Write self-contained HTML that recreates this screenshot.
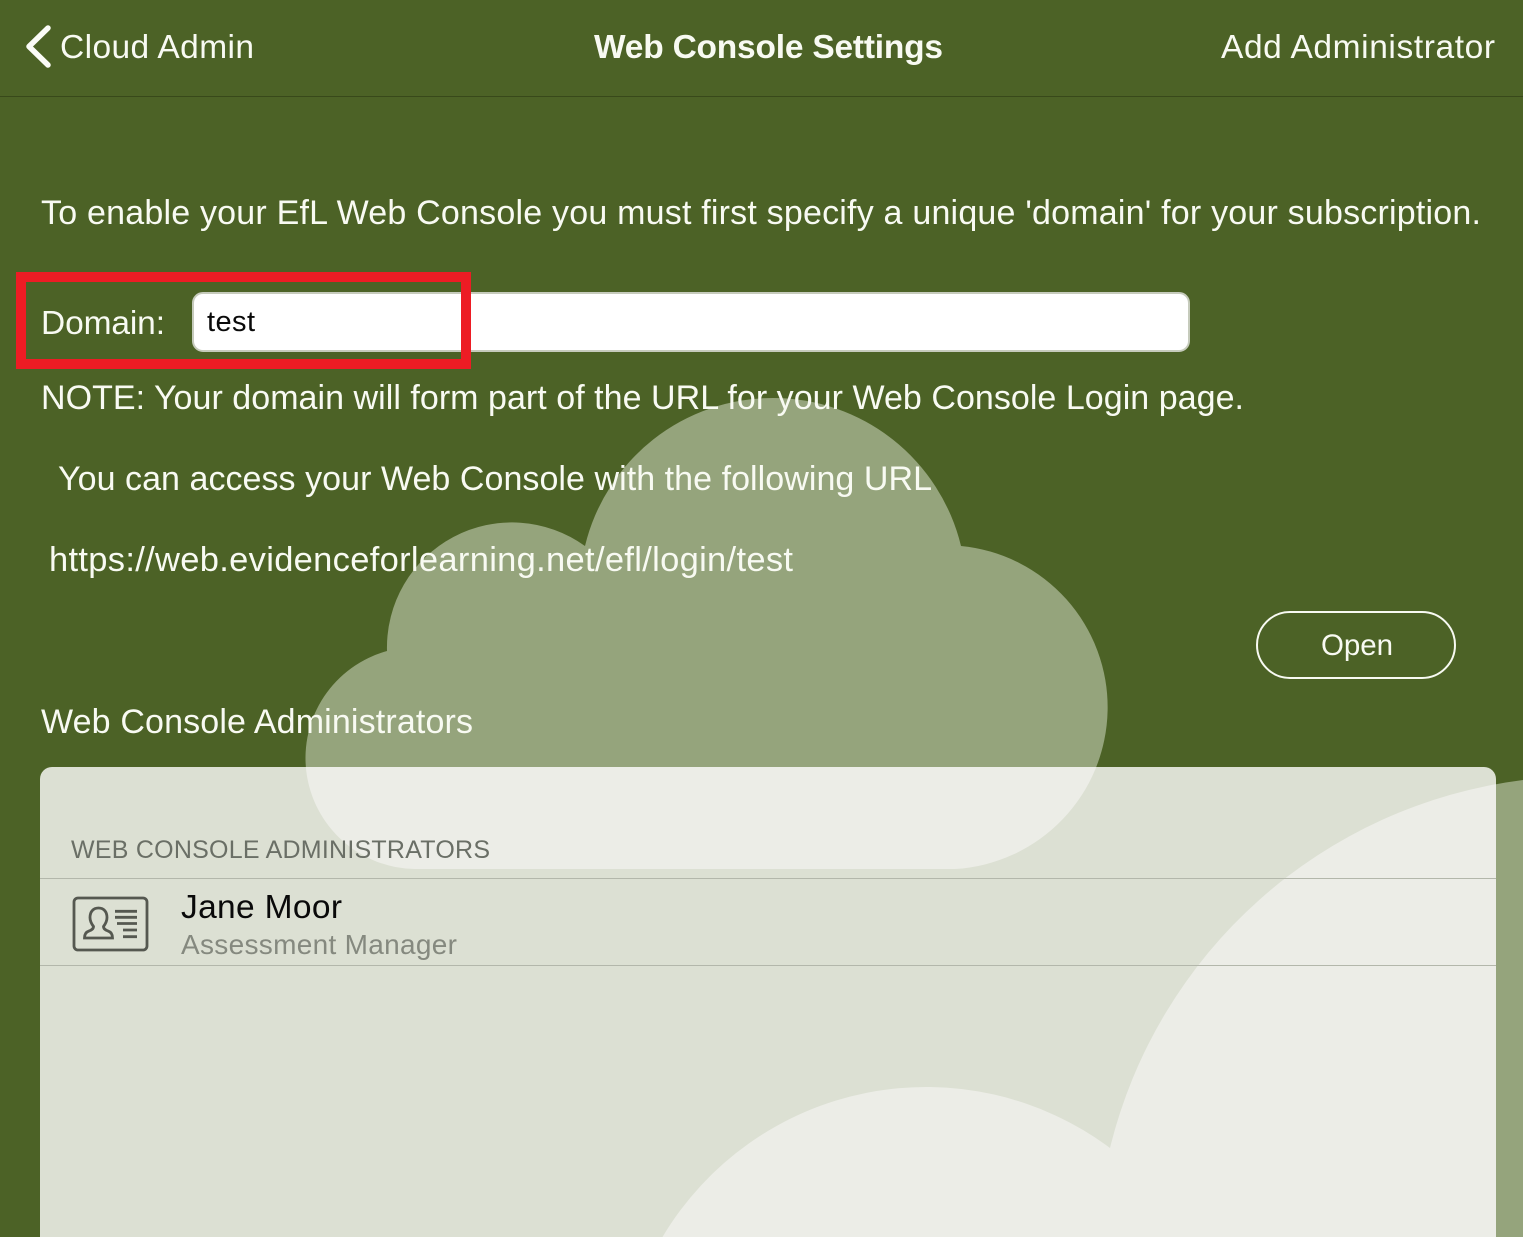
<!DOCTYPE html>
<html lang="en">
<head>
<meta charset="utf-8">
<title>Web Console Settings</title>
<style>
html,body{margin:0;padding:0;width:1523px;height:1237px;overflow:hidden;background:#4c6226}
svg{display:block;position:absolute;left:0;top:0;width:1523px;height:1237px}
text{font-family:"Liberation Sans",sans-serif;fill:#f8faf2}
</style>
</head>
<body>
<svg width="1523" height="1237" viewBox="0 0 1523 1237" xmlns="http://www.w3.org/2000/svg">
  <defs>
    <clipPath id="panelClip">
      <path d="M40 1237 V779 A12 12 0 0 1 52 767 H1484 A12 12 0 0 1 1496 779 V1237 Z"/>
    </clipPath>
  </defs>
  <rect width="1523" height="1237" fill="#4c6226"/>
  <rect x="0" y="96" width="1523" height="1" fill="#38491a"/>

  <!-- background clouds -->
  <path fill="#95a47c" d="M415 869 A111 111 0 0 1 387 651 A125 125 0 0 1 585 546 A193.400 193.400 0 0 1 961 546 A162 162 0 0 1 955 869 Z"/>
  <path fill="#95a47c" d="M662.500 1237 A307 307 0 0 1 1110 1148 A488 488 0 0 1 1523 780 V1237 Z"/>

  <!-- nav bar -->
  <path d="M48 28 L29 46.500 L48 65" fill="none" stroke="#fbfcf7" stroke-width="5.500" stroke-linecap="round" stroke-linejoin="round"/>
  <text x="60" y="58" font-size="33.500" textLength="194" lengthAdjust="spacing">Cloud Admin</text>
  <text x="594" y="58" font-size="33.500" font-weight="700" textLength="349" lengthAdjust="spacing">Web Console Settings</text>
  <text x="1221" y="58" font-size="33.500" textLength="274" lengthAdjust="spacing">Add Administrator</text>

  <!-- content text -->
  <text x="41" y="224" font-size="34" textLength="1440" lengthAdjust="spacing">To enable your EfL Web Console you must first specify a unique 'domain' for your subscription.</text>
  <text x="41" y="334" font-size="33.500" textLength="124" lengthAdjust="spacing">Domain:</text>

  <rect x="193" y="293" width="996" height="58" rx="10" fill="#ffffff" stroke="#c6cbbc" stroke-width="2"/>
  <text x="207" y="331" font-size="29" textLength="48" lengthAdjust="spacing" style="fill:#0a0a0a">test</text>

  <rect x="21" y="277" width="445" height="87" fill="none" stroke="#ed1c24" stroke-width="10"/>

  <text x="41" y="409" font-size="34" textLength="1203" lengthAdjust="spacing">NOTE: Your domain will form part of the URL for your Web Console Login page.</text>
  <text x="58" y="490" font-size="34" textLength="874" lengthAdjust="spacing">You can access your Web Console with the following URL</text>
  <text x="49" y="571" font-size="34.500" textLength="744" lengthAdjust="spacing">https://web.evidenceforlearning.net/efl/login/test</text>

  <rect x="1257" y="612" width="198" height="66" rx="33" fill="none" stroke="#f8faf2" stroke-width="2"/>
  <text x="1321" y="655" font-size="29.500" textLength="72" lengthAdjust="spacing">Open</text>

  <text x="41" y="733" font-size="34" textLength="432" lengthAdjust="spacing">Web Console Administrators</text>

  <!-- panel -->
  <path d="M40 1237 V779 A12 12 0 0 1 52 767 H1484 A12 12 0 0 1 1496 779 V1237 Z" fill="#dce0d3"/>
  <g clip-path="url(#panelClip)" fill="#ecede7">
    <path d="M415 869 A111 111 0 0 1 387 651 A125 125 0 0 1 585 546 A193.400 193.400 0 0 1 961 546 A162 162 0 0 1 955 869 Z"/>
    <path d="M662.500 1237 A307 307 0 0 1 1110 1148 A488 488 0 0 1 1523 780 V1237 Z"/>
  </g>
  <text x="71" y="858" font-size="25" textLength="419" lengthAdjust="spacing" style="fill:#6a6f66">WEB CONSOLE ADMINISTRATORS</text>
  <rect x="40" y="878" width="1456" height="1" fill="#b3b7ab"/>
  <rect x="40" y="965" width="1456" height="1" fill="#b3b7ab"/>

  <!-- id card icon -->
  <g fill="none" stroke="#555850" stroke-width="2.800">
    <rect x="74" y="898" width="73" height="52" rx="4"/>
    <path d="M98.500 908 C104 908 107 912 107 917.500 C107 921.500 105 924.500 103.500 926.500 C103.500 929 105.500 930 108 931 C111 932 112.500 934 112.500 938 H84.500 C84.500 934 86 932 89 931 C91.500 930 93.500 929 93.500 926.500 C92 924.500 90 921.500 90 917.500 C90 912 93 908 98.500 908 Z"/>
    <path d="M115 911.300 H137 M115 917.300 H137 M117 923.500 H137 M123 930 H137 M123 936.700 H137"/>
  </g>

  <text x="181" y="918" font-size="33.500" textLength="161" lengthAdjust="spacing" style="fill:#0a0a0a">Jane Moor</text>
  <text x="181" y="954" font-size="28" textLength="276" lengthAdjust="spacing" style="fill:#85897f">Assessment Manager</text>
</svg>
</body>
</html>
